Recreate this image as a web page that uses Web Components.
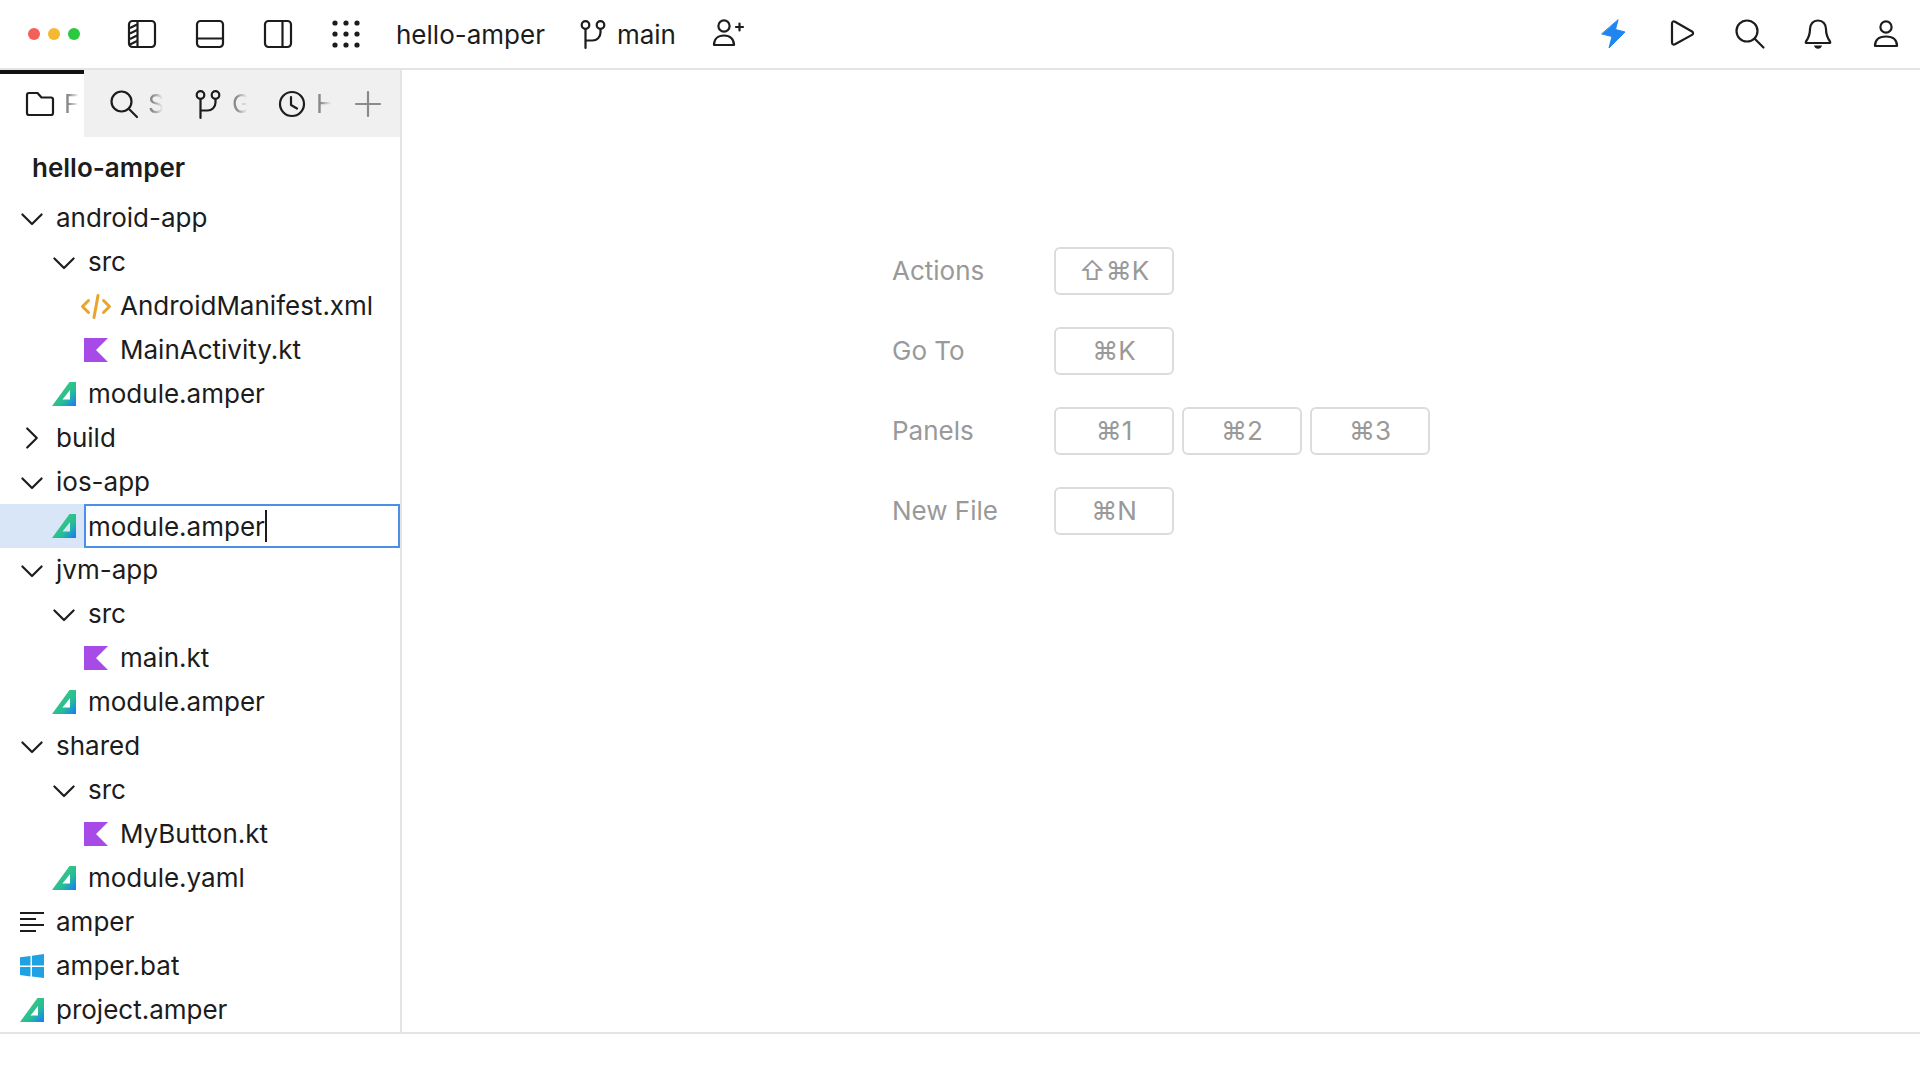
<!DOCTYPE html>
<html lang="en">
<head>
<meta charset="utf-8">
<title>hello-amper</title>
<style>
  html, body { margin: 0; padding: 0; background: #fff; }
  body { font-family: Inter, "Liberation Sans", sans-serif; color: #1c1c1c; }
</style>
</head>
<body>
<ide-window></ide-window>
<script>
const ICONS = {
  sidebarLeft: `<rect x="1" y="1" width="26" height="26" rx="3.5"/><path d="M2 8l7-3.500M2 13.500l7-3.500M2 19l7-3.500M2 24.500l7-3.500" stroke-width="2" stroke-linecap="butt"/><path d="M9.500 1v26"/>`,
  sidebarBottom: `<rect x="1" y="1" width="26" height="26" rx="3.5"/><path d="M1 18.500h26"/>`,
  sidebarRight: `<rect x="1" y="1" width="26" height="26" rx="3.5"/><path d="M18.500 1v26"/>`,
  grid: `<g fill="#1c1c1c" stroke="none"><circle cx="3" cy="3" r="2.600"/><circle cx="14" cy="3" r="2.600"/><circle cx="25" cy="3" r="2.600"/><circle cx="3" cy="14" r="2.600"/><circle cx="14" cy="14" r="2.600"/><circle cx="25" cy="14" r="2.600"/><circle cx="3" cy="25" r="2.600"/><circle cx="14" cy="25" r="2.600"/><circle cx="25" cy="25" r="2.600"/></g>`,
  branch: `<circle cx="6.500" cy="5" r="3.800"/><circle cx="21.500" cy="5" r="3.800"/><path d="M6.500 9v19M6.500 20.500h7a8 8 0 0 0 8-8V9"/>`,
  userPlus: `<circle cx="12" cy="8" r="5.600"/><path d="M2 27c0-6 4-9.500 10-9.500s10 3.500 10 9.500z"/><path d="M24 9h7M27.500 5.500v7"/>`,
  bolt: `<path fill="#1f86f0" stroke="#1f86f0" stroke-width="1" d="M20 2 17.500 11.500 27 14 11 30 14 18.500 4 16Z"/>`,
  play: `<path d="M6 5.500c0-1.800 1.400-2.600 3-1.800l17 9.800c1.400.8 1.400 2.600 0 3.400L9 26.300c-1.600.8-3 0-3-1.800z"/>`,
  search: `<circle cx="13" cy="13" r="10.500"/><path d="m21 21 8.500 8.500"/>`,
  bell: `<path d="M16 2.500c-5 0-8 3.700-8 8.500 0 6-1.500 9-4 12.500-.6.900-.2 1.500.8 1.500h22.400c1 0 1.400-.6.800-1.500-2.500-3.500-4-6.500-4-12.500 0-4.800-3-8.500-8-8.500z"/><path fill="#1c1c1c" stroke="none" d="M12 27.500h8c-.6 2.200-2 3.300-4 3.300s-3.400-1.100-4-3.300z"/>`,
  user: `<circle cx="16" cy="9" r="5.600"/><path d="M5 28c0-6.500 4.500-9.500 11-9.500S27 21.500 27 28z"/>`,
  folder: `<path d="M1 5a2 2 0 0 1 2-2h8.500l4 4.500H25a2 2 0 0 1 2 2V23a2 2 0 0 1-2 2H3a2 2 0 0 1-2-2z"/>`,
  tabSearch: `<circle cx="11.500" cy="11.500" r="10"/><path d="m19 19 8 8"/>`,
  clock: `<circle cx="14" cy="14" r="12"/><path d="M13 7v8l6 3.500"/>`,
  plus: `<path d="M2 14h24M14 2v24" stroke="#8a8a8a"/>`,
  chevronDown: `<path d="m2 7 8 8 8-8" stroke-width="1.800"/>`,
  chevronRight: `<path d="m6 2 8 8-8 8" stroke-width="1.800"/>`,
};

// file icons use a 24 box and their own colours
const FILE_ICONS = {
  xml: `<g fill="none" stroke="#eaa42c" stroke-width="3" stroke-linecap="round" stroke-linejoin="round"><path d="M7.500 6.500 1.500 12.500l6 6M22.500 6.500l6 6-6 6M17 1.500 13 23.500"/></g>`,
  kotlin: `<path fill="#a64be8" d="M0 0h24L12 12l12 12H0z"/>`,
  amper: `<defs><linearGradient id="a" x1=".15" y1=".2" x2=".95" y2=".95"><stop offset="0" stop-color="#43c777"/><stop offset=".6" stop-color="#25bd98"/><stop offset="1" stop-color="#1a7ff5"/></linearGradient></defs><path fill="url(#a)" fill-rule="evenodd" d="M17.500 0H24v24H0zM18 8 10.500 17.500H18z"/>`,
  lines: `<g fill="#1c1c1c"><rect x="0" y="2" width="24" height="2"/><rect x="0" y="8" width="16" height="2"/><rect x="0" y="14" width="24" height="2"/><rect x="0" y="20" width="16" height="2"/></g>`,
  windows: `<g fill="#1ea2e4"><path d="M0 3.300 10.500 2v9.500H0zM12 1.800 24 0v11.500H12zM0 13h10.500v9.500L0 21zM12 13h12v11l-12-1.500z"/></g>`,
};

class IdeIcon extends HTMLElement {
  constructor() {
    super();
    this.attachShadow({ mode: "open" });
  }

  connectedCallback() {
    const name = this.getAttribute("name");
    const box = this.getAttribute("box") || 32;
    const size = this.getAttribute("size") || box;
    this.shadowRoot.innerHTML = /* html */`
    <style>
      :host { display: flex; align-items: center; justify-content: center; flex: none; width: ${size}px; height: ${size}px; }
      svg { display: block; fill: none; stroke: currentColor; stroke-width: 2.200; stroke-linecap: round; stroke-linejoin: round; overflow: visible; color: #1c1c1c; }
    </style>
    <svg width="${size}" height="${size}" viewBox="0 0 ${box} ${box}">${ICONS[name]}</svg>`;
  }
}

class FileIcon extends HTMLElement {
  constructor() {
    super();
    this.attachShadow({ mode: "open" });
  }

  connectedCallback() {
    const name = this.getAttribute("name");
    const box = name === "xml" ? 30 : 24;
    this.shadowRoot.innerHTML = /* html */`
    <style>
      :host { display: flex; align-items: center; justify-content: center; flex: none; width: 24px; height: 24px; }
      svg { display: block; overflow: visible; flex: none; }
    </style>
    <svg width="${box}" height="${name === "xml" ? 25 : 24}" viewBox="0 0 ${box} ${name === "xml" ? 25 : 24}">${FILE_ICONS[name]}</svg>`;
  }
}

class IdeHeader extends HTMLElement {
  constructor() {
    super();
    this.attachShadow({ mode: "open" });
  }

  connectedCallback() {
    this.shadowRoot.innerHTML = /* html */`
    <style>
      :host { display: flex; align-items: center; height: 68px; border-bottom: 2px solid #e4e4e4; box-sizing: content-box; font-size: 26px; padding: 0 18px 0 28px; }
      .lights { display: flex; gap: 8px; margin-right: 48px; }
      .lights i { width: 12px; height: 12px; border-radius: 50%; }
      .group { display: flex; align-items: center; gap: 40px; }
      .project { margin-left: 36px; }
      .branch { display: flex; align-items: center; margin-left: 34px; gap: 10px; }
      .invite { margin-left: 36px; }
      .right { display: flex; align-items: center; gap: 36px; margin-left: auto; }
    </style>
    <div class="lights">
      <i style="background:#f45f58"></i><i style="background:#f5b82e"></i><i style="background:#2ac940"></i>
    </div>
    <div class="group">
      <ide-icon name="sidebarLeft" box="28"></ide-icon>
      <ide-icon name="sidebarBottom" box="28"></ide-icon>
      <ide-icon name="sidebarRight" box="28"></ide-icon>
      <ide-icon name="grid" box="28"></ide-icon>
    </div>
    <span class="project">hello-amper</span>
    <div class="branch"><ide-icon name="branch" box="28"></ide-icon><span>main</span></div>
    <ide-icon class="invite" name="userPlus"></ide-icon>
    <div class="right">
      <ide-icon name="bolt"></ide-icon>
      <ide-icon name="play"></ide-icon>
      <ide-icon name="search"></ide-icon>
      <ide-icon name="bell"></ide-icon>
      <ide-icon name="user"></ide-icon>
    </div>`;
  }
}

class IdeTab extends HTMLElement {
  constructor() {
    super();
    this.attachShadow({ mode: "open" });
  }

  connectedCallback() {
    this.shadowRoot.innerHTML = /* html */`
    <style>
      :host { display: flex; align-items: center; width: 84px; height: 67px; box-sizing: border-box; padding-left: 26px; flex: none; position: relative; font-size: 26px; color: #8a8a8a; }
      :host([active]) { background: #fff; }
      :host([active])::before { content: ""; position: absolute; left: 0; top: 0; right: 0; height: 4px; background: #111; }
      .label { width: 15px; margin-left: 10px; overflow: hidden; white-space: nowrap; -webkit-mask-image: linear-gradient(90deg, #000 30%, transparent); mask-image: linear-gradient(90deg, #000 30%, transparent); }
    </style>
    <ide-icon name="${this.getAttribute("icon")}" box="28"></ide-icon>
    <span class="label"><slot></slot></span>`;
  }
}

class IdeTabs extends HTMLElement {
  constructor() {
    super();
    this.attachShadow({ mode: "open" });
  }

  connectedCallback() {
    this.shadowRoot.innerHTML = /* html */`
    <style>
      :host { display: flex; align-items: center; height: 67px; background: #f0f0f0; }
      .add { flex: none; margin-left: 18px; }
    </style>
    <ide-tab icon="folder" active>Files</ide-tab>
    <ide-tab icon="tabSearch">Search</ide-tab>
    <ide-tab icon="branch">Git</ide-tab>
    <ide-tab icon="clock">History</ide-tab>
    <ide-icon class="add" name="plus" box="28"></ide-icon>`;
  }
}

class TreeRow extends HTMLElement {
  constructor() {
    super();
    this.attachShadow({ mode: "open" });
  }

  connectedCallback() {
    const level = Number(this.getAttribute("level") || 0);
    const icon = this.getAttribute("icon");
    const glyph = icon.startsWith("chevron")
      ? `<ide-icon name="${icon}" box="20" size="24"></ide-icon>`
      : `<file-icon name="${icon}"></file-icon>`;
    this.shadowRoot.innerHTML = /* html */`
    <style>
      :host { display: flex; align-items: center; height: 44px; box-sizing: border-box; padding-left: ${20 + level * 32}px; font-size: 26px; white-space: nowrap; }
      .text { margin-left: 12px; padding-bottom: 2px; }
      :host([editing]) { background: #d9e6f8; }
      :host([editing]) .text { flex: 1; align-self: stretch; display: flex; align-items: center; margin-left: 8px; padding: 0 0 0 2px; background: #fff; border: 2px solid #4a90e8; }
      :host([editing]) .text::after { content: ""; width: 2px; height: 32px; background: #1c1c1c; }
    </style>
    ${glyph}
    <span class="text"><slot></slot></span>`;
  }
}

class FileTree extends HTMLElement {
  constructor() {
    super();
    this.attachShadow({ mode: "open" });
  }

  connectedCallback() {
    this.shadowRoot.innerHTML = /* html */`
    <style>
      :host { display: block; }
      h1 { margin: 0; height: 59px; line-height: 62px; padding-left: 32px; font-size: 26px; font-weight: 600; }
    </style>
    <h1>hello-amper</h1>
    <tree-row icon="chevronDown">android-app</tree-row>
    <tree-row level="1" icon="chevronDown">src</tree-row>
    <tree-row level="2" icon="xml">AndroidManifest.xml</tree-row>
    <tree-row level="2" icon="kotlin">MainActivity.kt</tree-row>
    <tree-row level="1" icon="amper">module.amper</tree-row>
    <tree-row icon="chevronRight">build</tree-row>
    <tree-row icon="chevronDown">ios-app</tree-row>
    <tree-row level="1" icon="amper" editing>module.amper</tree-row>
    <tree-row icon="chevronDown">jvm-app</tree-row>
    <tree-row level="1" icon="chevronDown">src</tree-row>
    <tree-row level="2" icon="kotlin">main.kt</tree-row>
    <tree-row level="1" icon="amper">module.amper</tree-row>
    <tree-row icon="chevronDown">shared</tree-row>
    <tree-row level="1" icon="chevronDown">src</tree-row>
    <tree-row level="2" icon="kotlin">MyButton.kt</tree-row>
    <tree-row level="1" icon="amper">module.yaml</tree-row>
    <tree-row icon="lines">amper</tree-row>
    <tree-row icon="windows">amper.bat</tree-row>
    <tree-row icon="amper">project.amper</tree-row>`;
  }
}

class KeyCap extends HTMLElement {
  constructor() {
    super();
    this.attachShadow({ mode: "open" });
  }

  connectedCallback() {
    this.shadowRoot.innerHTML = /* html */`
    <style>
      :host { display: flex; align-items: center; justify-content: center; width: 120px; height: 48px; box-sizing: border-box; border: 2px solid #dcdcdc; border-radius: 6px; padding-bottom: 2px; font-size: 26px; color: #999; }
    </style>
    <slot></slot>`;
  }
}

class HintPanel extends HTMLElement {
  constructor() {
    super();
    this.attachShadow({ mode: "open" });
  }

  connectedCallback() {
    this.shadowRoot.innerHTML = /* html */`
    <style>
      :host { display: grid; grid-template-columns: 162px auto; row-gap: 32px; align-content: start; justify-content: start; padding: 177px 0 0 490px; font-size: 26px; color: #999; }
      .label { display: flex; align-items: center; height: 46px; }
      .keys { display: flex; gap: 8px; }
    </style>
    <span class="label">Actions</span><div class="keys"><key-cap>⇧⌘K</key-cap></div>
    <span class="label">Go To</span><div class="keys"><key-cap>⌘K</key-cap></div>
    <span class="label">Panels</span><div class="keys"><key-cap>⌘1</key-cap><key-cap>⌘2</key-cap><key-cap>⌘3</key-cap></div>
    <span class="label">New File</span><div class="keys"><key-cap>⌘N</key-cap></div>`;
  }
}

class IdeWindow extends HTMLElement {
  constructor() {
    super();
    this.attachShadow({ mode: "open" });
  }

  connectedCallback() {
    this.shadowRoot.innerHTML = /* html */`
    <style>
      :host { display: flex; flex-direction: column; width: 1920px; height: 1080px; overflow: hidden; background: #fff; }
      .body { display: flex; height: 962px; border-bottom: 2px solid #e4e4e4; }
      .side { width: 400px; flex: none; border-right: 2px solid #e4e4e4; }
      hint-panel { flex: 1; }
    </style>
    <ide-header></ide-header>
    <div class="body">
      <div class="side">
        <ide-tabs></ide-tabs>
        <file-tree></file-tree>
      </div>
      <hint-panel></hint-panel>
    </div>`;
  }
}

customElements.define("ide-icon", IdeIcon);
customElements.define("file-icon", FileIcon);
customElements.define("ide-header", IdeHeader);
customElements.define("ide-tab", IdeTab);
customElements.define("ide-tabs", IdeTabs);
customElements.define("tree-row", TreeRow);
customElements.define("file-tree", FileTree);
customElements.define("key-cap", KeyCap);
customElements.define("hint-panel", HintPanel);
customElements.define("ide-window", IdeWindow);
</script>
</body>
</html>
